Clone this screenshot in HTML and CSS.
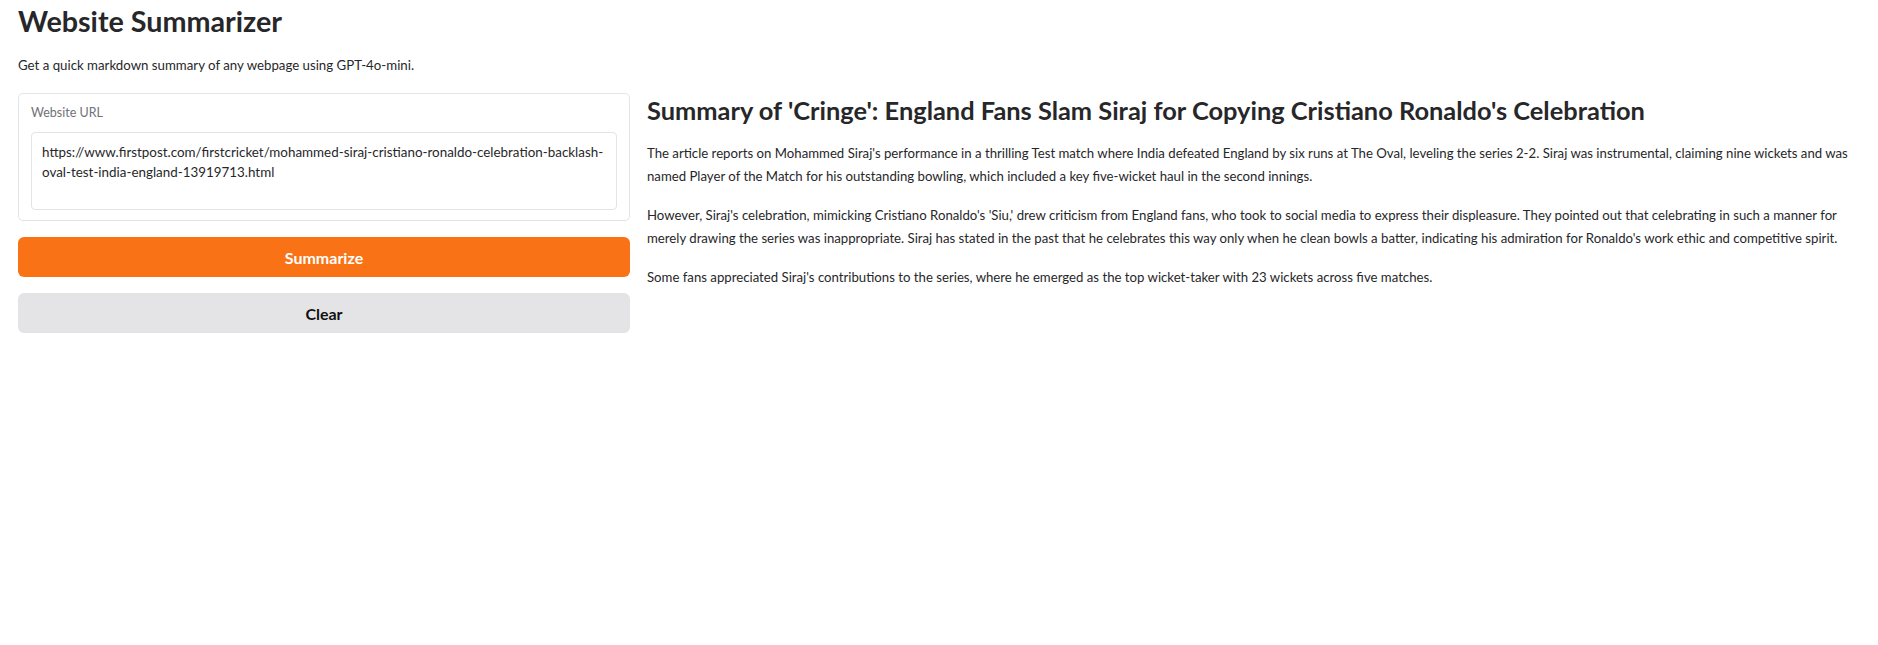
FILE: index.html
```html
<!DOCTYPE html>
<html lang="en">
<head>
<meta charset="utf-8">
<title>Website Summarizer</title>
<link rel="stylesheet" href="styles.css">
</head>
<body>
<div class="app">
  <header class="intro">
    <h1 class="title">Website Summarizer</h1>
    <p class="subtitle">Get a quick markdown summary of any webpage using GPT-4o-mini.</p>
  </header>
  <div class="row">
    <div class="left">
      <div class="block">
        <label class="label" for="url">Website URL</label>
        <textarea id="url" class="url-input">https://www.firstpost.com/firstcricket/mohammed-siraj-cristiano-ronaldo-celebration-backlash-oval-test-india-england-13919713.html</textarea>
      </div>
      <button class="btn btn-primary">Summarize</button>
      <button class="btn btn-secondary">Clear</button>
    </div>
    <div class="right">
      <h2 class="summary-title">Summary of 'Cringe': England Fans Slam Siraj for Copying Cristiano Ronaldo's Celebration</h2>
      <p class="para">The article reports on Mohammed Siraj's performance in a thrilling Test match where India defeated England by six runs at The Oval, leveling the series 2-2. Siraj was instrumental, claiming nine wickets and was named Player of the Match for his outstanding bowling, which included a key five-wicket haul in the second innings.</p>
      <p class="para">However, Siraj's celebration, mimicking Cristiano Ronaldo's 'Siu,' drew criticism from England fans, who took to social media to express their displeasure. They pointed out that celebrating in such a manner for merely drawing the series was inappropriate. Siraj has stated in the past that he celebrates this way only when he clean bowls a batter, indicating his admiration for Ronaldo's work ethic and competitive spirit.</p>
      <p class="para">Some fans appreciated Siraj's contributions to the series, where he emerged as the top wicket-taker with 23 wickets across five matches.</p>
    </div>
  </div>
</div>
</body>
</html>
```

FILE: styles.css
```css
* { box-sizing: border-box; }

body {
  margin: 0;
  background: #ffffff;
  color: #27272a;
  font-family: Lato, "Noto Sans", sans-serif;
}

.app {
  padding: 0 18px;
}

.intro {
  padding-top: 3px;
}

.title {
  margin: 0;
  font-size: 28.7px;
  font-weight: 700;
  line-height: 36px;
  color: #27272a;
}

.subtitle {
  margin: 16px 0 0;
  font-size: 13.25px;
  line-height: 20px;
}

.row {
  display: flex;
  gap: 17px;
  margin-top: 18px;
  align-items: flex-start;
}

.left {
  width: 612px;
  flex: none;
  display: flex;
  flex-direction: column;
  gap: 16px;
}

.block {
  border: 1px solid #e4e4e7;
  border-radius: 5px;
  padding: 9px 12px 10px;
  display: flex;
  flex-direction: column;
  gap: 9px;
  background: #fff;
}

.label {
  font-size: 12.5px;
  line-height: 20px;
  color: #71717a;
}

.url-input {
  display: block;
  width: 100%;
  height: 78px;
  resize: none;
  border: 1px solid #e4e4e7;
  border-radius: 4px;
  padding: 9px 4px 9px 10px;
  font-family: inherit;
  font-size: 13.4px;
  line-height: 20px;
  color: #27272a;
  background: #fff;
  overflow: hidden;
}

.btn {
  display: block;
  width: 100%;
  height: 40px;
  border: none;
  border-radius: 6px;
  font-family: inherit;
  font-size: 16px;
  font-weight: 700;
}

.btn-primary {
  background: #f97316;
  color: #ffffff;
}

.btn-secondary {
  background: #e4e4e7;
  color: #111111;
}

.right {
  flex: 1;
  min-width: 0;
}

.summary-title {
  margin: 0;
  font-size: 25.4px;
  line-height: 34px;
  font-weight: 700;
}

.para {
  margin: 15px 0 0;
  font-size: 13.2px;
  line-height: 22.5px;
}

.para + .para {
  margin-top: 17px;
}
```
